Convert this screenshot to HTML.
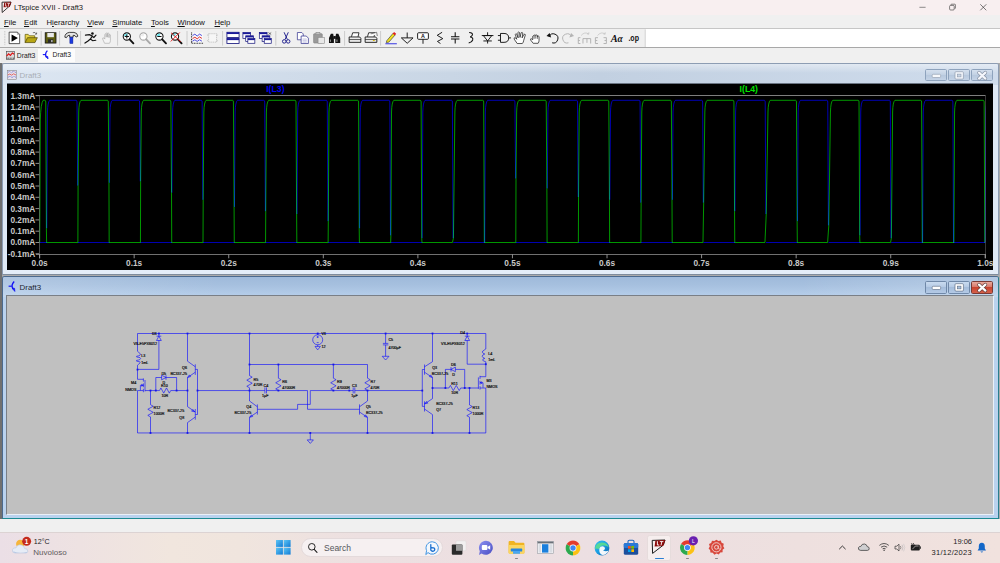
<!DOCTYPE html><html><head><meta charset="utf-8"><title>LTspice XVII - Draft3</title><style>
*{box-sizing:border-box;margin:0;padding:0}
html,body{width:1000px;height:563px;overflow:hidden;background:#f0f0f0;font-family:"Liberation Sans",sans-serif;}
#root{position:absolute;left:0;top:0;width:1000px;height:563px;overflow:hidden;background:#f0f0f0}
.abs{position:absolute}
#titlebar{left:0;top:0;width:1000px;height:15px;background:#f8eff0}
#titlebar .t{position:absolute;left:14px;top:2.5px;font-size:7.6px;color:#1a1a1a;white-space:nowrap}
#menubar{left:0;top:15px;width:1000px;height:13.5px;background:#f0f0f0}
#menubar span{position:absolute;top:2.6px;font-size:7.7px;color:#111;white-space:nowrap}
#menubar u{text-decoration:underline;text-underline-offset:0.6px;text-decoration-thickness:0.55px}
#tbline{left:0;top:28.2px;width:1000px;height:0.9px;background:#c6c6c6}
#toolbar{left:0;top:29px;width:1000px;height:18.3px;background:#f0f0f0}
#tbwhite{left:645.5px;top:29px;width:354.5px;height:18.3px;background:#fff}
#tbline2{left:0;top:47.2px;width:1000px;height:1px;background:#a8a8a8}
#tabbar{left:0;top:48.2px;width:1000px;height:15px;background:#f0f0f0}
.tab{position:absolute;top:0.5px;height:13.5px;font-size:6.8px;color:#222;white-space:nowrap}
#mdi{left:0;top:63px;width:1000px;height:456px;background:#ababab}
.yl{position:absolute;left:0;width:35.3px;text-align:right;font-size:8.3px;font-weight:bold;color:#c8c8c8;line-height:10px;height:10px;white-space:nowrap}
.xl{position:absolute;top:258.2px;width:30px;text-align:center;font-size:8.3px;font-weight:bold;color:#c8c8c8;line-height:10px;height:10px;white-space:nowrap}
.win{position:absolute;border-radius:2.6px 2.6px 0 0;overflow:hidden}
.wt{position:absolute;font-size:7.9px;white-space:nowrap}
.cb{position:absolute;top:5.7px;height:12.4px;width:21.6px;border:0.6px solid #8ea3bd;border-radius:1.6px;background:linear-gradient(#d5e0ee,#c3d2e4 45%,#b7c8dd 50%,#c4d3e6)}
#statusbar{left:0;top:519px;width:1000px;height:13.3px;background:#f0f0f0}
#taskbar{left:0;top:532.3px;width:1000px;height:30.7px;background:linear-gradient(90deg,#ebdfe6,#eee2e2 8%,#f1e6de 17%,#f0e5de 24%,#ede0e1 36%,#ecdfe2 60%,#eee0df 80%,#f1e2de);border-top:0.7px solid #dcd3d3}
</style></head><body><div id="root">
<div id="titlebar" class="abs"><svg class="abs" style="left:1px;top:1px" width="12" height="13" viewBox="0 0 12 13"><path d="M1 1.2 L1.2 11.5 L9 4.6 L10 1 Z" fill="none" stroke="#222" stroke-width="0.9"/><path d="M3.2 1.6 L10.2 1.2 L8.6 6 L2.6 6.2 Z" fill="#8b0a0a"/><path d="M4.6 2 V5.2 H6 M6.4 2.4 H9 M7.8 2.4 L7.2 5.6" stroke="#f4e6e6" stroke-width="0.8" fill="none"/></svg><div class="t">LTspice XVII - Draft3</div><svg class="abs" style="left:900px;top:0" width="100" height="15" viewBox="0 0 100 15"><path d="M19.4 7.3 H25.6" stroke="#444" stroke-width="0.6"/><rect x="49.6" y="5.4" width="4.6" height="4.6" rx="1" fill="none" stroke="#333" stroke-width="0.6"/><path d="M51 5.2 V4.6 Q51 4.2 51.6 4.2 H54.8 Q55.4 4.2 55.4 4.8 V8 Q55.4 8.6 54.8 8.6" fill="none" stroke="#333" stroke-width="0.6"/><path d="M80.3 4.3 L86.3 10.3 M86.3 4.3 L80.3 10.3" stroke="#333" stroke-width="0.65"/></svg></div>
<div id="menubar" class="abs"><span style="left:4px"><u>F</u>ile</span><span style="left:24px"><u>E</u>dit</span><span style="left:46.5px">H<u>i</u>erarchy</span><span style="left:87.3px"><u>V</u>iew</span><span style="left:112.3px"><u>S</u>imulate</span><span style="left:151px"><u>T</u>ools</span><span style="left:177.5px"><u>W</u>indow</span><span style="left:214.5px"><u>H</u>elp</span></div>
<div id="tbline" class="abs"></div><div id="toolbar" class="abs"></div><div id="tbwhite" class="abs"></div><div id="tbline2" class="abs"></div>
<svg class="abs" style="left:0;top:0" width="1000" height="50" viewBox="0 0 1000 50"><path d="M4.8 31 V45.5" stroke="#b8b8b8" stroke-width="0.9" stroke-dasharray="0.8 0.8"/><path d="M41.2 31 V45.6" stroke="#c2c2c2" stroke-width="0.8"/><path d="M59.6 31 V45.6" stroke="#c2c2c2" stroke-width="0.8"/><path d="M80.6 31 V45.6" stroke="#c2c2c2" stroke-width="0.8"/><path d="M117.6 31 V45.6" stroke="#c2c2c2" stroke-width="0.8"/><path d="M187 31 V45.6" stroke="#c2c2c2" stroke-width="0.8"/><path d="M222.6 31 V45.6" stroke="#c2c2c2" stroke-width="0.8"/><path d="M275.8 31 V45.6" stroke="#c2c2c2" stroke-width="0.8"/><path d="M344.6 31 V45.6" stroke="#c2c2c2" stroke-width="0.8"/><path d="M380.6 31 V45.6" stroke="#c2c2c2" stroke-width="0.8"/><path d="M645.2 29.5 V47" stroke="#d0d0d0" stroke-width="0.8"/><g transform="translate(14.4 37.9) scale(1.17)"><path d="M-4.5 -4.9 H2.6 L4.5 -3 V4.9 H-4.5 Z" fill="#fff" stroke="#222" stroke-width="0.65"/><path d="M2.6 -4.9 V-3 H4.5" fill="none" stroke="#555" stroke-width="0.4"/><path d="M-2.4 -3 L3 0.1 L-2.4 3.2 Z" fill="#000"/></g><g transform="translate(31 37.9) scale(1.17)"><path d="M-5 4 V-3 H-2.4 L-1.4 -1.8 H3.2 V0" fill="#e8d44a" stroke="#5a5200" stroke-width="0.6"/><path d="M-5 4 L-3 -0.2 H5.4 L3.4 4 Z" fill="#b8a614" stroke="#4a4400" stroke-width="0.6"/><path d="M1.6 -4.4 Q3.6 -5.4 4.6 -3.4 M4.8 -3.2 L3.4 -3.2 M4.8 -3.2 L4.8 -4.6" stroke="#222" stroke-width="0.5" fill="none"/></g><g transform="translate(50.6 37.9) scale(1.17)"><rect x="-4.6" y="-4.4" width="9.2" height="8.8" fill="#5d5d10" stroke="#111" stroke-width="0.7"/><rect x="-2.8" y="-4.2" width="5.6" height="3.6" fill="#e9e9e9"/><rect x="-2.2" y="1.2" width="4.4" height="3" fill="#2a2a2a"/><rect x="0.6" y="1.8" width="1" height="1.8" fill="#ddd"/></g><g transform="translate(71.4 37.9) scale(1.17)"><path d="M-5.6 -0.6 Q-5.6 -4 -1.8 -4.7 H2.2 Q5 -4.5 5.6 -1.5 L4 -0.7 Q3.4 -2.4 1.5 -2.2 V-0.7 H-1.5 V-2.3 Q-3.4 -2.5 -4.2 -0.2 Z" fill="#e4e4e4" stroke="#1a1a1a" stroke-width="0.7"/><rect x="-1.3" y="-0.6" width="2.6" height="5.4" fill="#1a3ae0" stroke="#0a1a90" stroke-width="0.4"/></g><g transform="translate(90.6 37.9) scale(1.17)"><circle cx="1.6" cy="-3.8" r="1.1" fill="#111"/><path d="M-4.4 -2.4 L-1 -2.8 L1.4 -1.6 L-0.2 1 L1.8 2.4 L4.4 2 M-0.2 1 L-2.2 2.6 L-4.8 4.4 M0.4 -1.8 L2.8 -0.4 L4.6 -2.4" stroke="#111" stroke-width="1" fill="none" stroke-linecap="round"/></g><g transform="translate(107.6 37.9) scale(1.17)"><path d="M-2.6 4.6 L-4.2 1 Q-4.6 -0.4 -3.2 0 L-2.4 1 V-3 Q-1.8 -4 -1.2 -3 V-0.6 V-4 Q-0.6 -5 0 -4 V-0.6 V-3.6 Q0.6 -4.6 1.2 -3.6 V-0.2 V-2.6 Q1.9 -3.4 2.4 -2.6 V2.2 Q2.4 3.6 1.6 4.6 Z" fill="#f4f4f4" stroke="#a9a9a9" stroke-width="0.55"/></g><g transform="translate(128 37.9) scale(1.17)"><circle cx="-1" cy="-1.2" r="3.1" fill="#fff" stroke="#111" stroke-width="0.9"/><path d="M-3.4 -1.6 A2.5 2.5 0 0 1 -0.2 -3.6 L-1 -1.2 Z" fill="#6fe6ee"/><path d="M1.4 1.2 L4.6 4.6" stroke="#111" stroke-width="1.6" stroke-linecap="round"/><path d="M-2.8 -1.2 H0.8 M-1 -3 V0.6" stroke="#111" stroke-width="0.9"/></g><g transform="translate(144.6 37.9) scale(1.17)"><circle cx="-1" cy="-1.2" r="3.1" fill="#fff" stroke="#a8a8a8" stroke-width="0.9"/><path d="M-3.4 -1.6 A2.5 2.5 0 0 1 -0.2 -3.6 L-1 -1.2 Z" fill="#eeeeee"/><path d="M1.4 1.2 L4.6 4.6" stroke="#a8a8a8" stroke-width="1.6" stroke-linecap="round"/></g><g transform="translate(160.6 37.9) scale(1.17)"><circle cx="-1" cy="-1.2" r="3.1" fill="#fff" stroke="#111" stroke-width="0.9"/><path d="M-3.4 -1.6 A2.5 2.5 0 0 1 -0.2 -3.6 L-1 -1.2 Z" fill="#6fe6ee"/><path d="M1.4 1.2 L4.6 4.6" stroke="#111" stroke-width="1.6" stroke-linecap="round"/><path d="M-2.8 -1.2 H0.8" stroke="#111" stroke-width="0.9"/></g><g transform="translate(176.2 37.9) scale(1.17)"><circle cx="-1" cy="-1.2" r="3.1" fill="#fff" stroke="#111" stroke-width="0.9"/><path d="M-3.4 -1.6 A2.5 2.5 0 0 1 -0.2 -3.6 L-1 -1.2 Z" fill="#6fe6ee"/><path d="M1.4 1.2 L4.6 4.6" stroke="#111" stroke-width="1.6" stroke-linecap="round"/><path d="M-4.4 -4.4 L3.8 3.2 M3 -4.6 L-4.6 3" stroke="#e01818" stroke-width="0.8"/></g><g transform="translate(197.2 37.9) scale(1.17)"><rect x="-4.8" y="-4.6" width="9.8" height="9.2" fill="#f7f7f7"/><path d="M-4.8 -4.6 V4.6 H5" fill="none" stroke="#222" stroke-width="0.9" stroke-dasharray="0.8 0.6"/><path d="M-4 -2 L-2 -3.2 L0 -1.6 L2 -3.2 L4 -2 M-4 2.8 L-2 1.6 L0 3 L2 1.6 L4 2.8" stroke="#2a2ad8" stroke-width="0.7" fill="none"/><path d="M-4 0.6 L-2 -0.6 L0 0.8 L2 -0.8 L4 0.4" stroke="#e02020" stroke-width="0.8" fill="none"/></g><g transform="translate(212.6 37.9) scale(1.17)"><path d="M-3.4 -3.6 H3.4 V3.6 H-3.4 Z M-4.8 -2.4 H-3.4 M3.4 -2.4 H4.8 M-4.8 2.4 H-3.4 M3.4 2.4 H4.8" fill="#f6f6f6" stroke="#b4b4b4" stroke-width="0.6" stroke-dasharray="1 0.6"/></g><g transform="translate(233 37.9) scale(1.17)"><rect x="-5.2" y="-4.8" width="10.4" height="4.4" fill="#fff" stroke="#10107a" stroke-width="0.7"/><rect x="-5.2" y="-4.8" width="10.4" height="1.5" fill="#1a1a9a"/><rect x="-5.2" y="0.4" width="10.4" height="4.4" fill="#fff" stroke="#10107a" stroke-width="0.7"/><rect x="-5.2" y="0.4" width="10.4" height="1.5" fill="#1a1a9a"/></g><g transform="translate(249 37.9) scale(1.17)"><rect x="-5.2" y="-4.6" width="6.6" height="5" fill="#fff" stroke="#10107a" stroke-width="0.6"/><rect x="-5.2" y="-4.6" width="6.6" height="1.4" fill="#1a1a9a"/><rect x="-2.8" y="-1.8" width="6.6" height="5" fill="#fff" stroke="#10107a" stroke-width="0.6"/><rect x="-2.8" y="-1.8" width="6.6" height="1.4" fill="#1a1a9a"/><rect x="-1" y="0.6" width="6" height="4" fill="#fff" stroke="#10107a" stroke-width="0.6"/><rect x="-1" y="0.6" width="6" height="1.3" fill="#1a1a9a"/></g><g transform="translate(265.4 37.9) scale(1.17)"><rect x="-5.2" y="-4.6" width="6.6" height="5" fill="#fff" stroke="#10107a" stroke-width="0.6"/><rect x="-5.2" y="-4.6" width="6.6" height="1.4" fill="#1a1a9a"/><rect x="-2.8" y="-1.8" width="6.6" height="5" fill="#fff" stroke="#10107a" stroke-width="0.6"/><rect x="-2.8" y="-1.8" width="6.6" height="1.4" fill="#1a1a9a"/><rect x="-1" y="0.6" width="6" height="4" fill="#fff" stroke="#10107a" stroke-width="0.6"/><rect x="-1" y="0.6" width="6" height="1.3" fill="#1a1a9a"/><path d="M2.6 -4.6 L5 -2.8 M5 -4.6 L2.6 -2.8" stroke="#333" stroke-width="0.5"/></g><g transform="translate(286.2 37.9) scale(1.17)"><path d="M-1.8 -4.8 L1 1.4 M1.8 -4.8 L-1 1.4" stroke="#1a1a8a" stroke-width="0.8"/><circle cx="-1.7" cy="3" r="1.5" fill="none" stroke="#1a1a8a" stroke-width="0.8"/><circle cx="1.7" cy="3" r="1.5" fill="none" stroke="#1a1a8a" stroke-width="0.8"/></g><g transform="translate(303 37.9) scale(1.17)"><path d="M-4.8 -4.6 H-1 L0.2 -3.4 V1.6 H-4.8 Z" fill="#fff" stroke="#2a2a8a" stroke-width="0.6"/><path d="M-1.6 -1.6 H2.8 L4.6 0.2 V4.8 H-1.6 Z" fill="#fff" stroke="#2a2a8a" stroke-width="0.6"/><path d="M-0.4 1 H3.2 M-0.4 2.4 H3.2 M-0.4 3.6 H3.2" stroke="#8a8ac8" stroke-width="0.45"/></g><g transform="translate(319 37.9) scale(1.17)"><rect x="-4.6" y="-3.6" width="7.4" height="8" rx="0.6" fill="#9a9a9a" stroke="#7a7a7a" stroke-width="0.5"/><rect x="-2.6" y="-4.8" width="3.4" height="2" fill="#c4c4c4" stroke="#7a7a7a" stroke-width="0.4"/><rect x="-0.8" y="-0.4" width="5.6" height="5.2" fill="#e8e8e8" stroke="#8a8a8a" stroke-width="0.5"/></g><g transform="translate(334.6 37.9) scale(1.17)"><path d="M-4.8 4.4 V0 L-3.2 -3.6 H-1.2 L-0.6 0 V4.4 Z M4.8 4.4 V0 L3.2 -3.6 H1.2 L0.6 0 V4.4 Z" fill="#111"/><rect x="-1" y="-1.6" width="2" height="2.4" fill="#111"/><path d="M-3.6 1.4 V3.4 M2 1.4 V3.4" stroke="#ddd" stroke-width="0.6"/></g><g transform="translate(355 37.9) scale(1.17)"><path d="M-3 -1 L-2 -4.4 H3.4 L2.6 -1" fill="#fff" stroke="#111" stroke-width="0.7"/><path d="M-5 -0.8 H4 L5 0.4 V3.8 H-5 Z" fill="#ececec" stroke="#111" stroke-width="0.75"/><path d="M-5 1.4 H5" stroke="#222" stroke-width="0.6"/></g><g transform="translate(371 37.9) scale(1.17)"><path d="M-3 -1 L-2 -4.4 H3.4 L2.6 -1" fill="#fff" stroke="#111" stroke-width="0.7"/><path d="M-5 -0.8 H4 L5 0.4 V3.8 H-5 Z" fill="#ececec" stroke="#111" stroke-width="0.75"/><path d="M-5 1.4 H5" stroke="#222" stroke-width="0.6"/><path d="M-0.2 -3.4 L4.8 -4.8 L5.4 -1.6" fill="#f4f4f4" stroke="#333" stroke-width="0.5"/><rect x="1.6" y="1.8" width="1.6" height="0.8" fill="#d8b400"/></g><g transform="translate(391 37.9) scale(1.17)"><path d="M-3.6 2.4 L1.8 -4 L3.6 -2.6 L-1.8 3.6 L-4 4 Z" fill="#f0e020" stroke="#222" stroke-width="0.5"/><path d="M1.4 -3.6 L2.6 -5 L4.4 -3.6 L3.4 -2.2 Z" fill="#e02020"/><path d="M-4.8 5 H5" stroke="#2a2ae0" stroke-width="0.8"/></g><g transform="translate(407.2 37.9) scale(1.17)"><path d="M0 -4.6 V0 M-5 0 H5 L0 4.6 Z" fill="none" stroke="#111" stroke-width="0.8"/></g><g transform="translate(423 37.9) scale(1.17)"><rect x="-4.6" y="-4.4" width="9.2" height="5.6" rx="0.8" fill="#fff" stroke="#111" stroke-width="0.8"/><path d="M0 1.2 V5" stroke="#111" stroke-width="0.8"/><text x="0" y="0" font-size="4.6" font-weight="bold" text-anchor="middle" fill="#111" font-family="Liberation Sans, sans-serif">A</text></g><g transform="translate(440 37.9) scale(1.17)"><path d="M1.8 -4.8 L-2.4 -2.2 L2.4 0.6 L-2.2 3 L0.4 4.8" fill="none" stroke="#111" stroke-width="0.8"/></g><g transform="translate(455.2 37.9) scale(1.17)"><path d="M0 -4.8 V-1 M-3.6 -1 H3.6 M-3.6 1 H3.6 M0 1 V4.8" fill="none" stroke="#111" stroke-width="0.9"/></g><g transform="translate(470.8 37.9) scale(1.17)"><path d="M-1.4 -4.6 Q1.8 -4.4 1.4 -2.6 Q1 -1.2 -0.6 -0.8 Q2.2 -0.4 1.6 1.8 Q1 3.8 -1.8 4.4" fill="none" stroke="#111" stroke-width="0.9"/></g><g transform="translate(487.6 37.9) scale(1.17)"><path d="M-5 -2 H5 M-3.6 -2 L0 2.6 L3.6 -2 Z M-3.6 2.6 H3.6 M0 2.6 V4.8 M0 -2 V-4.8" fill="none" stroke="#111" stroke-width="0.8"/></g><g transform="translate(504 37.9) scale(1.17)"><path d="M-5.2 -2 H-3 M-5.2 2 H-3 M-3 -3.8 H0 Q4 -3.8 4 0 Q4 3.8 0 3.8 H-3 Z M4 0 H6" fill="none" stroke="#111" stroke-width="0.8"/></g><g transform="translate(520 37.9) scale(1.17)"><path d="M-2.4 4.8 L-5 1 Q-5.4 -0.6 -3.8 0 L-2.8 1.2 L-4 -3 Q-3.6 -4.2 -2.8 -3.2 L-1.6 0 L-1.8 -4.6 Q-1 -5.6 -0.4 -4.6 L0 -0.4 L1 -4.4 Q1.8 -5.2 2.4 -4.2 L1.8 0 L3.4 -3 Q4.4 -3.6 4.6 -2.6 L3.2 2 Q3 3.8 2 4.8 Z" fill="#fff" stroke="#111" stroke-width="0.6"/></g><g transform="translate(536 37.9) scale(1.17)"><path d="M-2.4 4.6 L-4.6 1.8 Q-5 0.4 -3.6 0.8 L-2.8 1.6 V-1.4 Q-2.2 -2.4 -1.6 -1.4 V-2.2 Q-0.9 -3.2 -0.2 -2.2 V-2 Q0.5 -3 1.2 -2 V-1.2 Q1.9 -2 2.6 -1.2 V2.4 Q2.6 3.6 1.8 4.6 Z" fill="#fff" stroke="#111" stroke-width="0.6"/><path d="M-1.6 -1.4 V0.8 M-0.2 -2.2 V0.6 M1.2 -2 V0.8" stroke="#111" stroke-width="0.5"/></g><g transform="translate(552.6 37.9) scale(1.17)"><path d="M-2.9 -1.2 A3.9 3.9 0 1 1 -0.4 4.2" fill="none" stroke="#111" stroke-width="0.85"/><path d="M-5.2 -1.6 L-1.2 -0.4 L-2.6 -4.2 Z" fill="#111"/></g><g transform="translate(568 37.9) scale(1.17)"><path d="M2.9 -1.2 A3.9 3.9 0 1 0 0.4 4.2" fill="none" stroke="#b4b4b4" stroke-width="0.85"/><path d="M5.2 -1.6 L1.2 -0.4 L2.6 -4.2 Z" fill="#b4b4b4"/></g><g transform="translate(584.6 37.9) scale(1.17)"><path d="M-3.6 -0.2 H-5.4 V4.8 H-3.6 M-5.4 2.2 H-4 M-1.4 4.8 V0.6 H5.2 V4.8 M2 0.6 V4.2" fill="none" stroke="#b0b0b0" stroke-width="0.8"/><path d="M-3 -2 Q0 -5.6 3.4 -3.4 M3.6 -3.2 L2 -3.4 M3.6 -3.2 L3.6 -4.8" fill="none" stroke="#b8b8b8" stroke-width="0.5"/></g><g transform="translate(601 37.9) scale(1.17)"><path d="M-2.6 -0.2 H-4.8 V4.8 H-2.6 M-4.8 2.2 H-3.2 M2.2 -0.2 H4.6 V4.8 H2.2 M4.6 2.2 H3" fill="none" stroke="#b0b0b0" stroke-width="0.8"/><path d="M-3 -2 Q0 -5.6 3.4 -3.4 M3.6 -3.2 L2 -3.4 M3.6 -3.2 L3.6 -4.8" fill="none" stroke="#b8b8b8" stroke-width="0.5"/></g><text x="610.8" y="42.2" font-size="10.4" font-weight="bold" font-style="italic" fill="#111" font-family="Liberation Serif, serif">A</text><text x="617.6" y="42.2" font-size="9.4" font-weight="bold" font-style="italic" fill="#111" font-family="Liberation Serif, serif">α</text><text x="628.4" y="41.4" font-size="8.6" font-weight="bold" fill="#111" font-family="Liberation Sans, sans-serif" textLength="10.6" lengthAdjust="spacingAndGlyphs">.op</text></svg>
<div id="tabbar" class="abs"><div class="tab" style="left:1px;width:36.5px;background:#ebebeb"></div><div class="tab" style="left:37.5px;width:37.5px;background:#fcfcfc"></div><svg class="abs" style="left:5.5px;top:3px" width="9" height="9" viewBox="0 0 9 9"><rect x="0.3" y="0.3" width="8.2" height="8" fill="#d9d9d9" stroke="#444" stroke-width="0.6"/><path d="M0.6 5.2 L2.6 2.8 L4.4 4.4 L6.4 2 L8.2 3.2" stroke="#e01010" stroke-width="1.1" fill="none"/><path d="M0.6 7.2 H8.2" stroke="#333" stroke-width="0.9" stroke-dasharray="1 0.6"/></svg><span class="tab" style="left:16.8px;top:3.4px;height:auto">Draft3</span><svg class="abs" style="left:41.5px;top:2.2px" width="8" height="10" viewBox="0 0 8 10"><path d="M5.4 0.6 Q2.2 3.8 4.6 7.6" stroke="#1414f4" stroke-width="1.25" fill="none"/><path d="M0.8 4.6 H3.4" stroke="#1414f4" stroke-width="1.1"/><path d="M3.8 6.2 L6 9 L5.8 6.6 Z" fill="#1414f4" stroke="#1414f4" stroke-width="0.7"/></svg><span class="tab" style="left:52.5px;top:2.8px;height:auto">Draft3</span></div>
<div id="mdi" class="abs"></div>
<div class="abs" style="left:0;top:63px;width:1.6px;height:456px;background:#707070"></div>
<div class="win" style="left:1.5px;top:63.4px;width:997.5px;height:212px;background:#dfe9f5;border:0.6px solid #8d9db3;border-bottom-color:#7f8c9c"><div class="abs" style="left:0;top:0;width:100%;height:20.5px;background:linear-gradient(90deg,#dce6f2,#c9d6e5 45%,#c2d0e1 60%,#cfdcec)"></div><div class="abs" style="left:0;top:0;width:100%;height:9px;background:linear-gradient(rgba(255,255,255,.45),rgba(255,255,255,0))"></div><div class="abs" style="left:4.4px;top:18.9px;width:986.5px;height:187.1px;background:#000;border-top:0.8px solid #6a7482"></div><div class="abs" style="left:0;top:206px;width:100%;height:6px;background:#e4edf8"></div></div>
<svg class="abs" style="left:6.6px;top:69.5px" width="10" height="10" viewBox="0 0 10 10"><rect x="0.4" y="0.4" width="9" height="9" fill="#e6e2ea" stroke="#777" stroke-width="0.5"/><path d="M0.8 2.4 L2.6 1.4 L4.4 2.8 L6.4 1.2 L9 2.6 M0.8 7.4 L3 6.2 L5 7.6 L7 6.2 L9 7.4" stroke="#7a7ad8" stroke-width="0.9" fill="none" stroke-dasharray="1.2 0.5"/><path d="M0.8 5 L2.8 4 L4.6 5.2 L6.6 3.8 L9 5" stroke="#e06a6a" stroke-width="1" fill="none"/></svg>
<div class="wt" style="left:19.6px;top:71px;color:#a9aeb6">Draft3</div>
<div class="cb" style="left:925.4px;top:69.1px"></div>
<div class="cb" style="left:948.4px;top:69.1px"></div>
<div class="cb" style="left:971.4px;top:69.1px"></div>
<svg class="abs" style="left:925px;top:69px" width="70" height="13" viewBox="0 0 70 13"><rect x="7.2" y="5.3" width="8.4" height="3.2" rx="1" fill="#f6f8fb" stroke="#8b97a8" stroke-width="0.6"/><rect x="30" y="2.7" width="8.4" height="7.4" rx="1" fill="#f2f5fa" stroke="#8490a2" stroke-width="0.6"/><rect x="32.4" y="5.1" width="3.6" height="2.8" fill="#c9d6e6" stroke="#8490a2" stroke-width="0.5"/><path d="M54 3.6 L60.4 9.6 M60.4 3.6 L54 9.6" stroke="#8490a2" stroke-width="3.5" stroke-linecap="round"/><path d="M54 3.6 L60.4 9.6 M60.4 3.6 L54 9.6" stroke="#f4f6fb" stroke-width="2.2" stroke-linecap="round"/></svg>
<svg class="abs" style="left:0;top:0" width="1000" height="280" viewBox="0 0 1000 280"><defs><clipPath id="pc"><rect x="39.6" y="96" width="945.9" height="158"/></clipPath></defs><path d="M36 95.6 H985.3 M39.6 95.6 V258.3 M36 254.3 H985.3 M985.3 95.6 V258.3" stroke="#9c9c9c" stroke-width="0.9" fill="none"/>
<path d="M35.5 95.60 H39.6 M35.5 106.90 H39.6 M35.5 118.20 H39.6 M35.5 129.50 H39.6 M35.5 140.80 H39.6 M35.5 152.10 H39.6 M35.5 163.40 H39.6 M35.5 174.70 H39.6 M35.5 186.00 H39.6 M35.5 197.30 H39.6 M35.5 208.60 H39.6 M35.5 219.90 H39.6 M35.5 231.20 H39.6 M35.5 242.50 H39.6 M35.5 253.80 H39.6 M39.60 254.3 V258.3 M134.17 254.3 V258.3 M228.74 254.3 V258.3 M323.31 254.3 V258.3 M417.88 254.3 V258.3 M512.45 254.3 V258.3 M607.02 254.3 V258.3 M701.59 254.3 V258.3 M796.16 254.3 V258.3 M890.73 254.3 V258.3 M985.30 254.3 V258.3 " stroke="#9c9c9c" stroke-width="0.9" fill="none"/>
<g clip-path="url(#pc)" fill="none" stroke-width="0.7" stroke-linejoin="round" style="isolation:isolate"><rect x="39" y="95" width="948" height="160" fill="#000" stroke="none"/><path d="M39.6 242.5 L46.80 242.5 M46.80 228.28 L47.45 112 Q47.70 102 49.75 100.3 L76.13 100.3 Q77.03 100.3 77.03 102 L77.68 185.62 M77.88 242.5 L109.36 242.5 M109.36 182.78 L110.01 112 Q110.26 102 112.31 100.3 L138.69 100.3 Q139.59 100.3 139.59 102 L140.24 181.35 M140.44 242.5 L171.92 242.5 M171.92 192.73 L172.57 112 Q172.82 102 174.87 100.3 L201.25 100.3 Q202.15 100.3 202.15 102 L202.80 199.84 M203.00 242.5 L234.48 242.5 M234.48 206.95 L235.13 112 Q235.38 102 237.43 100.3 L263.81 100.3 Q264.71 100.3 264.71 102 L265.36 211.22 M265.56 242.5 L297.04 242.5 M297.04 214.06 L297.69 112 Q297.94 102 299.99 100.3 L326.37 100.3 Q327.27 100.3 327.27 102 L327.92 221.17 M328.12 242.5 L359.60 242.5 M359.60 228.28 L360.25 112 Q360.50 102 362.55 100.3 L388.93 100.3 Q389.83 100.3 389.83 102 L390.48 235.39 M390.68 242.5 L422.16 242.5 M422.16 238.23 L422.81 112 Q423.06 102 425.11 100.3 L451.49 100.3 Q452.39 100.3 452.39 102 L453.04 238.23 M453.24 242.5 L484.72 242.5 L485.37 112 Q485.62 102 487.67 100.3 L514.05 100.3 Q514.95 100.3 514.95 102 L515.60 178.51 M515.80 242.5 L547.28 242.5 M547.28 188.46 L547.93 112 Q548.18 102 550.23 100.3 L576.61 100.3 Q577.51 100.3 577.51 102 L578.16 197.00 M578.36 242.5 L609.84 242.5 M609.84 199.84 L610.49 112 Q610.74 102 612.79 100.3 L639.17 100.3 Q640.07 100.3 640.07 102 L640.72 202.68 M640.92 242.5 L672.40 242.5 M672.40 199.84 L673.05 112 Q673.30 102 675.35 100.3 L701.73 100.3 Q702.63 100.3 702.63 102 L703.28 202.68 M703.48 242.5 L734.96 242.5 M734.96 211.22 L735.61 112 Q735.86 102 737.91 100.3 L764.29 100.3 Q765.19 100.3 765.19 102 L765.84 214.06 M766.04 242.5 L797.52 242.5 M797.52 221.17 L798.17 112 Q798.42 102 800.47 100.3 L826.85 100.3 Q827.75 100.3 827.75 102 L828.40 225.44 M828.60 242.5 L860.08 242.5 M860.08 235.39 L860.73 112 Q860.98 102 863.03 100.3 L889.41 100.3 Q890.31 100.3 890.31 102 L890.96 238.23 M891.16 242.5 L922.64 242.5 L923.29 112 Q923.54 102 925.59 100.3 L951.97 100.3 Q952.87 100.3 952.87 102 L953.52 242.50 L953.52 242.5 L985.20 242.5 L985.85 112 Q986.10 102 988.15 100.3 " stroke="#0000ff"/><path d="M39.7 242.5 L40.300000000000004 120 Q40.800000000000004 103 43.2 100.3 L44.85 100.3 Q45.75 100.3 45.75 102 L46.40 228.28 L46.60 242.5 L77.88 242.5 L78.08 185.62 L78.73 112 Q78.98 102 81.03 100.3 L107.41 100.3 Q108.31 100.3 108.31 102 L108.96 182.78 L109.16 242.5 L140.44 242.5 L140.64 181.35 L141.29 112 Q141.54 102 143.59 100.3 L169.97 100.3 Q170.87 100.3 170.87 102 L171.52 192.73 L171.72 242.5 L203.00 242.5 L203.20 199.84 L203.85 112 Q204.10 102 206.15 100.3 L232.53 100.3 Q233.43 100.3 233.43 102 L234.08 206.95 L234.28 242.5 L265.56 242.5 L265.76 211.22 L266.41 112 Q266.66 102 268.71 100.3 L295.09 100.3 Q295.99 100.3 295.99 102 L296.64 214.06 L296.84 242.5 L328.12 242.5 L328.32 221.17 L328.97 112 Q329.22 102 331.27 100.3 L357.65 100.3 Q358.55 100.3 358.55 102 L359.20 228.28 L359.40 242.5 L390.68 242.5 L390.88 235.39 L391.53 112 Q391.78 102 393.83 100.3 L420.21 100.3 Q421.11 100.3 421.11 102 L421.76 238.23 L421.96 242.5 L452.44 242.5 L453.44 238.23 L454.89 112 Q455.14 102 457.19 100.3 L482.77 100.3 Q483.67 100.3 483.67 102 L484.32 242.50 L484.52 242.5 L515.80 242.5 L516.00 178.51 L516.65 112 Q516.90 102 518.95 100.3 L545.33 100.3 Q546.23 100.3 546.23 102 L546.88 188.46 L547.08 242.5 L578.36 242.5 L578.56 197.00 L579.21 112 Q579.46 102 581.51 100.3 L607.89 100.3 Q608.79 100.3 608.79 102 L609.44 199.84 L609.64 242.5 L640.92 242.5 L641.12 202.68 L641.77 112 Q642.02 102 644.07 100.3 L670.45 100.3 Q671.35 100.3 671.35 102 L672.00 199.84 L672.20 242.5 L702.98 242.5 L703.68 202.68 L704.83 112 Q705.08 102 707.13 100.3 L733.01 100.3 Q733.91 100.3 733.91 102 L734.56 211.22 L734.76 242.5 L764.94 242.5 L766.24 214.06 L767.99 112 Q768.24 102 770.29 100.3 L795.57 100.3 Q796.47 100.3 796.47 102 L797.12 221.17 L797.32 242.5 L827.60 242.5 L828.80 225.44 L830.45 112 Q830.70 102 832.75 100.3 L858.13 100.3 Q859.03 100.3 859.03 102 L859.68 235.39 L859.88 242.5 L890.56 242.5 L891.36 238.23 L892.61 112 Q892.86 102 894.91 100.3 L920.69 100.3 Q921.59 100.3 921.59 102 L922.24 242.50 L922.44 242.5 L953.72 242.5 L953.92 242.50 L954.57 112 Q954.82 102 956.87 100.3 L983.25 100.3 Q984.15 100.3 984.15 102 L984.80 242.50 L985.00 242.5 " stroke="#00d800" style="mix-blend-mode:screen"/></g></svg>
<div class="abs" style="left:0;top:0;width:993px;height:269.2px;overflow:hidden;pointer-events:none"><div class="yl" style="top:90.60px">1.3mA</div>
<div class="yl" style="top:101.89px">1.2mA</div>
<div class="yl" style="top:113.18px">1.1mA</div>
<div class="yl" style="top:124.48px">1.0mA</div>
<div class="yl" style="top:135.77px">0.9mA</div>
<div class="yl" style="top:147.06px">0.8mA</div>
<div class="yl" style="top:158.35px">0.7mA</div>
<div class="yl" style="top:169.65px">0.6mA</div>
<div class="yl" style="top:180.94px">0.5mA</div>
<div class="yl" style="top:192.23px">0.4mA</div>
<div class="yl" style="top:203.52px">0.3mA</div>
<div class="yl" style="top:214.82px">0.2mA</div>
<div class="yl" style="top:226.11px">0.1mA</div>
<div class="yl" style="top:237.40px">0.0mA</div>
<div class="yl" style="top:248.69px">-0.1mA</div>
<div class="xl" style="left:24.60px">0.0s</div>
<div class="xl" style="left:119.17px">0.1s</div>
<div class="xl" style="left:213.74px">0.2s</div>
<div class="xl" style="left:308.31px">0.3s</div>
<div class="xl" style="left:402.88px">0.4s</div>
<div class="xl" style="left:497.45px">0.5s</div>
<div class="xl" style="left:592.02px">0.6s</div>
<div class="xl" style="left:686.59px">0.7s</div>
<div class="xl" style="left:781.16px">0.8s</div>
<div class="xl" style="left:875.73px">0.9s</div>
<div class="xl" style="left:970.30px">1.0s</div><div class="abs" style="left:266.2px;top:84.1px;font-size:8.7px;font-weight:bold;color:#0000f4;line-height:10px">I(L3)</div><div class="abs" style="left:739.6px;top:84.1px;font-size:8.7px;font-weight:bold;color:#00e400;line-height:10px">I(L4)</div></div>
<div class="win" style="left:1.5px;top:275.8px;width:997.5px;height:243.2px;background:#bad2ee;border:0.7px solid #4c6a8e;border-bottom:0.9px solid #1d8a92;border-right-color:#2a7e8e"><div class="abs" style="left:0;top:0;width:100%;height:20px;background:linear-gradient(#9fbadb,#a6c0df 40%,#b7cfeb)"></div><div class="abs" style="left:0;top:0;width:100%;height:20px;background:linear-gradient(90deg,rgba(255,255,255,.16),rgba(255,255,255,0) 22%,rgba(255,255,255,0) 80%,rgba(255,255,255,.2))"></div><div class="abs" style="left:3.7px;top:18.2px;width:988px;height:219.7px;background:#c0c0c0;border:0.8px solid #7a7f86;border-right:0.6px solid #eaf0f8;border-bottom:0.6px solid #eaf0f8"></div></div>
<svg class="abs" style="left:7.5px;top:281.4px" width="8" height="11" viewBox="0 0 8 11"><path d="M6.2 0.6 Q2.6 4.2 5 8.2" stroke="#1414f4" stroke-width="1.35" fill="none"/><path d="M0.6 5.2 H3.8" stroke="#1414f4" stroke-width="1.2"/><path d="M4.2 7 L6.8 10.4 L6.6 7.4 Z" fill="#1414f4" stroke="#1414f4" stroke-width="0.8"/></svg>
<div class="wt" style="left:19.6px;top:283.2px;color:#1d2530">Draft3</div>
<div class="cb" style="left:925.4px;top:281.4px;border-color:#6f88a8;background:linear-gradient(#c9dbf0,#b5cae4 45%,#a5bddb 50%,#b4cae6)"></div>
<div class="cb" style="left:948.4px;top:281.4px;border-color:#6f88a8;background:linear-gradient(#c9dbf0,#b5cae4 45%,#a5bddb 50%,#b4cae6)"></div>
<div class="cb" style="left:971.4px;top:281.4px;border-color:#7a3a34;background:linear-gradient(#e7a99d,#d9786a 45%,#c9432f 50%,#d4604a)"></div>
<svg class="abs" style="left:925px;top:281.3px" width="70" height="13" viewBox="0 0 70 13"><rect x="7.2" y="5.3" width="8.4" height="3.2" rx="1" fill="#fff" stroke="#55657c" stroke-width="0.6"/><rect x="30" y="2.7" width="8.4" height="7.4" rx="1" fill="#fff" stroke="#4e5d72" stroke-width="0.6"/><rect x="32.4" y="5.1" width="3.6" height="2.8" fill="#a9c0dc" stroke="#4e5d72" stroke-width="0.5"/><path d="M54 3.6 L60.4 9.6 M60.4 3.6 L54 9.6" stroke="#5e3c3a" stroke-width="3.5" stroke-linecap="round"/><path d="M54 3.6 L60.4 9.6 M60.4 3.6 L54 9.6" stroke="#fff" stroke-width="2.2" stroke-linecap="round"/></svg>
<svg class="abs" style="left:0;top:296px" width="1000" height="222" viewBox="0 296 1000 222">
<g fill="none" stroke="#0808ff" stroke-width="0.62" stroke-linecap="butt" stroke-linejoin="miter">
<path d="M137.5 333.5 H485.8 M137.5 432.95 H485.9 M249.5 364.5 H367.5 M137.5 333.5 V351.3 M137.5 351.3 L140.2 353.7 Q141 355 139 355.8 Q135.6 356 136.6 357 Q141.4 357.4 140.6 358.6 Q140 359.8 138.6 360 Q135.4 360.2 136.6 361.2 Q141.2 361.6 140.2 362.8 L137.5 365.2 M137.5 365.2 V379.3 H143.4 M143.4 378.4 V381.6 M143.4 383.4 V387.2 M143.4 388.8 V392.2 M145 380 V391.4 M143.4 390.55 H137.5 V432.95 M143.4 385.3 H140.4 V390.4 M143.2 385.3 L141.6 384.4 V386.2 Z M145 390.55 H159.5 M159.50 390.55 L160.90 387.95 L163.70 393.15 L166.50 387.95 L169.30 393.15 L170.70 390.55 M170.7 390.55 H187.5 M158.9 333.5 V336.2 M156.5 336.2 H161.3 M158.9 336.2 L156.5 340.5 H161.3 Z M158.9 340.5 V369.4 H137.5 M150.5 390.55 V404.7 M150.50 404.70 L153.20 406.22 L147.80 409.27 L153.20 412.32 L147.80 415.38 L150.50 416.90 M150.5 416.9 V432.95 M155.8 390.55 V377.5 H161.6 M161.6 375.2 V379.8 L166 377.5 Z M166 375.2 V379.8 M166 377.5 H176.6 V390.55 M187.5 333.5 V361.2 L195.3 366.8 M195.3 364.3 V374.9 M195.3 372.2 L187.5 377.6 V406.6 L195.3 412 M195.3 409 V419.7 M195.3 417 L187.5 422.6 V432.95 M187.6 377.4 L190.6 376.6 L189.4 374.9 Z M194.7 411.8 L191.6 411.2 L192.9 409.5 Z M195.3 369.4 H197.5 V414.5 H195.3 M197.5 390.55 H264.9 M264.9 387.4 V393.4 M266.5 387.4 V393.4 M266.5 390.55 H307.5 V409.3 H359.5 M249.5 333.5 V375.6 M249.50 375.60 L252.20 377.12 L246.80 380.18 L252.20 383.23 L246.80 386.28 L249.50 387.80 M249.5 387.8 V401 L257.4 406.8 M257.4 404.4 V414.6 M257.4 412 L249.5 417.4 V432.95 M249.7 417.2 L252.7 416.5 L251.5 414.8 Z M257.4 409.3 H297.6 V404.4 H310.3 V390.55 H353.2 M353.2 387.4 V393.4 M354.8 387.4 V393.4 M354.8 390.55 H422.3 M278.4 364.5 V378.2 M278.40 378.20 L281.10 379.72 L275.70 382.77 L281.10 385.82 L275.70 388.88 L278.40 390.40 M333.4 364.5 V378.2 M333.40 378.20 L336.10 379.72 L330.70 382.77 L336.10 385.82 L330.70 388.88 L333.40 390.40 M367.5 364.5 V378.2 M367.50 378.20 L370.20 379.72 L364.80 382.77 L370.20 385.82 L364.80 388.88 L367.50 390.40 M367.5 390.4 V401 L359.5 406.8 M359.5 404.4 V414.6 M359.5 412 L367.5 417.4 V432.95 M367.3 417.2 L364.3 416.5 L365.5 414.8 Z M317.7 333.5 V334.8 M317.7 344.8 V346.4 M315 346.4 H320.4 L317.7 349.9 Z M316.7 337 H318.7 M317.7 336 V338 M316.7 342.6 H318.7 M385.6 333.5 V343.4 M382.9 343.4 H388.3 M382.9 344.9 H388.3 M385.6 344.9 V356.3 M382.2 356.3 H389 L385.6 360 Z M310.3 432.95 V439.9 M307.2 439.9 H313.4 L310.3 443.4 Z M432.5 333.5 V361.7 L424.5 366.8 M424.5 364.5 V374.7 M424.5 372.2 L432.5 377.6 V398.6 L424.5 404 M424.5 401.3 V411.5 M424.5 409 L432.5 414.6 V432.95 M432.4 377.4 L429.4 376.6 L430.6 374.9 Z M424.7 403.8 L427.8 403.2 L426.5 401.5 Z M424.5 369.5 H422.3 V406.4 H424.5 M432.5 388.0 H448.9 M448.90 388.00 L450.38 385.40 L453.32 390.60 L456.27 385.40 L459.22 390.60 L460.70 388.00 M460.7 388.0 H478.6 M445.4 388.0 V369.4 H451 M451 367.1 V371.7 M455.4 367.1 V371.7 L451 369.4 Z M455.4 369.4 H464.7 V388.0 M469.5 388.0 V405 M469.50 405.00 L472.20 406.52 L466.80 409.57 L472.20 412.62 L466.80 415.68 L469.50 417.20 M469.5 417.2 V432.95 M467.2 333.5 V336.2 M464.8 336.2 H469.6 M467.2 336.2 L464.8 340.5 H469.6 Z M467.2 340.5 V364.2 H485.8 M485.8 333.5 V349 M485.8 349 L482.8 351 Q481.8 352.2 483 353.2 L484.8 354 L482.8 355 Q481.6 356.4 483 357.6 L484.8 358.4 L483 359.2 Q482 360 483.2 360.8 L485.8 361.8 M485.8 361.8 V376.7 H480 M480 375.8 V379 M480 380.8 V384.6 M480 386.2 V389.6 M478.4 377.4 V388.8 M480 388.0 H485.8 V432.95 M480 382.7 H483 V387.7 M480.2 382.7 L481.8 381.8 V383.6 Z"/>
<circle cx="317.7" cy="339.8" r="5"/>
</g>
<g fill="#1414e6"><rect x="136.60" y="368.70" width="1.8" height="1.8"/><rect x="158.00" y="332.60" width="1.8" height="1.8"/><rect x="149.60" y="389.65" width="1.8" height="1.8"/><rect x="149.60" y="432.05" width="1.8" height="1.8"/><rect x="154.90" y="389.65" width="1.8" height="1.8"/><rect x="175.70" y="389.65" width="1.8" height="1.8"/><rect x="186.60" y="389.65" width="1.8" height="1.8"/><rect x="186.60" y="332.60" width="1.8" height="1.8"/><rect x="186.60" y="432.05" width="1.8" height="1.8"/><rect x="196.60" y="389.65" width="1.8" height="1.8"/><rect x="248.60" y="332.60" width="1.8" height="1.8"/><rect x="248.60" y="363.60" width="1.8" height="1.8"/><rect x="248.60" y="389.65" width="1.8" height="1.8"/><rect x="248.60" y="432.05" width="1.8" height="1.8"/><rect x="277.50" y="363.60" width="1.8" height="1.8"/><rect x="277.50" y="389.65" width="1.8" height="1.8"/><rect x="332.50" y="363.60" width="1.8" height="1.8"/><rect x="332.50" y="389.65" width="1.8" height="1.8"/><rect x="348.40" y="389.65" width="1.8" height="1.8"/><rect x="366.60" y="389.65" width="1.8" height="1.8"/><rect x="366.60" y="432.05" width="1.8" height="1.8"/><rect x="316.80" y="332.60" width="1.8" height="1.8"/><rect x="384.70" y="332.60" width="1.8" height="1.8"/><rect x="309.40" y="432.05" width="1.8" height="1.8"/><rect x="431.60" y="332.60" width="1.8" height="1.8"/><rect x="431.60" y="432.05" width="1.8" height="1.8"/><rect x="421.40" y="389.65" width="1.8" height="1.8"/><rect x="431.60" y="387.10" width="1.8" height="1.8"/><rect x="444.50" y="387.10" width="1.8" height="1.8"/><rect x="463.80" y="387.10" width="1.8" height="1.8"/><rect x="468.60" y="387.10" width="1.8" height="1.8"/><rect x="468.60" y="432.05" width="1.8" height="1.8"/><rect x="466.30" y="332.60" width="1.8" height="1.8"/><rect x="484.90" y="363.30" width="1.8" height="1.8"/></g>
<g font-family="Liberation Sans, sans-serif" font-size="3.7" fill="#000" stroke="#000" stroke-width="0.16">
<text x="156.6" y="334.8" text-anchor="end">D3</text>
<text x="133.4" y="345.1" text-anchor="start">VS-E5PX6012</text>
<text x="141.2" y="357.0" text-anchor="start">L3</text>
<text x="141.2" y="363.6" text-anchor="start">1mL</text>
<text x="136.2" y="383.8" text-anchor="end">M4</text>
<text x="136.4" y="391.4" text-anchor="end">NMOS</text>
<text x="161.4" y="375.0" text-anchor="start">D5</text>
<text x="162.4" y="383.8" text-anchor="start">D</text>
<text x="161.0" y="387.4" text-anchor="start">R10</text>
<text x="161.4" y="397.4" text-anchor="start">10R</text>
<text x="153.6" y="408.8" text-anchor="start">R12</text>
<text x="153.6" y="414.9" text-anchor="start">1000R</text>
<text x="187.0" y="368.8" text-anchor="end">Q6</text>
<text x="187.0" y="374.9" text-anchor="end">BC337-25</text>
<text x="184.2" y="412.3" text-anchor="end">BC337-25</text>
<text x="184.2" y="418.8" text-anchor="end">Q8</text>
<text x="253.6" y="380.6" text-anchor="start">R5</text>
<text x="253.6" y="386.4" text-anchor="start">470R</text>
<text x="263.6" y="387.2" text-anchor="start">C4</text>
<text x="262.0" y="396.9" text-anchor="start">1µF</text>
<text x="282.3" y="383.0" text-anchor="start">R6</text>
<text x="282.3" y="388.7" text-anchor="start">47000R</text>
<text x="251.2" y="407.5" text-anchor="end">Q4</text>
<text x="251.2" y="413.9" text-anchor="end">BC337-25</text>
<text x="321.4" y="334.8" text-anchor="start">V3</text>
<text x="321.4" y="347.8" text-anchor="start">12</text>
<text x="388.4" y="341.3" text-anchor="start">C5</text>
<text x="388.4" y="349.3" text-anchor="start">4700µF</text>
<text x="337.0" y="383.0" text-anchor="start">R9</text>
<text x="337.0" y="388.7" text-anchor="start">47000R</text>
<text x="352.0" y="387.2" text-anchor="start">C3</text>
<text x="351.3" y="396.9" text-anchor="start">1µF</text>
<text x="370.6" y="383.0" text-anchor="start">R7</text>
<text x="370.6" y="388.7" text-anchor="start">470R</text>
<text x="366.0" y="407.5" text-anchor="start">Q5</text>
<text x="366.0" y="413.9" text-anchor="start">BC337-25</text>
<text x="460.3" y="334.4" text-anchor="start">D4</text>
<text x="441.0" y="344.8" text-anchor="start">VS-E5PX6012</text>
<text x="488.2" y="354.6" text-anchor="start">L4</text>
<text x="488.2" y="360.8" text-anchor="start">1mL</text>
<text x="432.2" y="368.8" text-anchor="start">Q3</text>
<text x="431.7" y="374.9" text-anchor="start">BC337-25</text>
<text x="451.0" y="366.1" text-anchor="start">D6</text>
<text x="452.2" y="375.8" text-anchor="start">D</text>
<text x="451.2" y="384.7" text-anchor="start">R11</text>
<text x="451.3" y="393.9" text-anchor="start">10R</text>
<text x="486.4" y="381.7" text-anchor="start">M3</text>
<text x="486.4" y="388.3" text-anchor="start">NMOS</text>
<text x="436.2" y="404.6" text-anchor="start">BC337-25</text>
<text x="436.2" y="411.0" text-anchor="start">Q7</text>
<text x="472.6" y="409.3" text-anchor="start">R13</text>
<text x="472.6" y="414.8" text-anchor="start">1000R</text>
</g></svg>
<div id="statusbar" class="abs"></div>
<div id="taskbar" class="abs"></div>
<svg class="abs" style="left:11.4px;top:534.2px" width="25.3" height="27.6" viewBox="0 0 22 24"><circle cx="8" cy="8.6" r="3.6" fill="#f6b53a"/><path d="M3.6 16.6 Q0.8 16.4 1.2 13.8 Q1.8 11.6 4.4 12 Q5.6 8.8 9 9.6 Q11.6 10.2 11.8 12.6 Q14.8 12.6 14.6 15 Q14.4 16.6 12.6 16.6 Z" fill="#e6ecf6" stroke="#b8c6de" stroke-width="0.5"/><path d="M2 15 Q7 17.8 14.4 15.4 Q14 16.6 12.6 16.6 H3.6 Q2.2 16.4 2 15 Z" fill="#b7c7e4"/><circle cx="13.6" cy="6.4" r="3.9" fill="#c42b1c"/><text x="13.6" y="8.4" font-size="5.6" font-weight="bold" fill="#fff" text-anchor="middle" font-family="Liberation Sans, sans-serif">1</text></svg>
<div class="abs" style="left:33.8px;top:538.1px;font-size:7.1px;color:#1b1b1b;white-space:nowrap">12°C</div>
<div class="abs" style="left:33.3px;top:547.7px;font-size:8px;color:#5e5a5c;white-space:nowrap">Nuvoloso</div>
<svg class="abs" style="left:276px;top:540.4px" width="15" height="15" viewBox="0 0 15 15"><defs><linearGradient id="wl" x1="0" y1="0" x2="1" y2="1"><stop offset="0" stop-color="#5fc6f4"/><stop offset="1" stop-color="#0f7ad6"/></linearGradient></defs><rect x="0" y="0" width="6.9" height="6.9" fill="url(#wl)"/><rect x="7.7" y="0" width="6.9" height="6.9" fill="url(#wl)"/><rect x="0" y="7.7" width="6.9" height="6.9" fill="url(#wl)"/><rect x="7.7" y="7.7" width="6.9" height="6.9" fill="url(#wl)"/></svg>
<div class="abs" style="left:300.8px;top:537.6px;width:142px;height:19.6px;border-radius:10px;background:#f6f0f1;border:0.6px solid #e4dadb"></div>
<svg class="abs" style="left:307px;top:541.6px" width="12" height="12" viewBox="0 0 12 12"><circle cx="4.8" cy="4.8" r="3.3" fill="none" stroke="#1e1e1e" stroke-width="0.95"/><path d="M7.2 7.4 L10 10.4" stroke="#1e1e1e" stroke-width="1.1" stroke-linecap="round"/></svg>
<div class="abs" style="left:324px;top:543.2px;font-size:8.5px;color:#55575b;white-space:nowrap">Search</div>
<svg class="abs" style="left:425.4px;top:540.6px" width="15" height="15" viewBox="0 0 15 15"><path d="M7.4 0.8 A6.2 6.2 0 1 1 3 11.6 L0.8 13.6 L1.6 9.6 A6.2 6.2 0 0 1 7.4 0.8 Z" fill="#f4f8fd" stroke="#2f8be0" stroke-width="0.9"/><path d="M5.8 3.6 V9.2 Q7.4 11.2 9.4 9.4 Q10.4 7.6 8.6 6.8 L6.4 6.6" fill="none" stroke="#1a6fd0" stroke-width="1.3" stroke-linecap="round" stroke-linejoin="round"/></svg>
<svg class="abs" style="left:451px;top:540px" width="16" height="16" viewBox="0 0 16 16"><rect x="5" y="0.8" width="10" height="10" rx="1" fill="#f2f0f0" stroke="#d8d4d4" stroke-width="0.4"/><rect x="0.8" y="4.6" width="10.6" height="10.2" rx="1" fill="#2b2b2b"/><rect x="5" y="4.6" width="6.4" height="6.2" fill="#9c9c9c"/></svg>
<svg class="abs" style="left:478.4px;top:540px" width="16" height="16" viewBox="0 0 16 16"><defs><linearGradient id="cg" x1="0" y1="0" x2="1" y2="1"><stop offset="0" stop-color="#8b8ff0"/><stop offset="1" stop-color="#4a4fc4"/></linearGradient></defs><path d="M8 0.8 A7 7 0 1 1 3.6 13.4 L1 15 L1.8 11.2 A7 7 0 0 1 8 0.8 Z" fill="url(#cg)"/><rect x="3.8" y="5" width="5.6" height="5" rx="1" fill="#fff"/><path d="M9.6 7 L12.2 5.2 V9.8 L9.6 8 Z" fill="#fff"/></svg>
<svg class="abs" style="left:508px;top:540px" width="17" height="15" viewBox="0 0 17 15"><path d="M0.6 2 Q0.6 1 1.6 1 H6 L7.6 2.8 H15.4 Q16.4 2.8 16.4 3.8 V12.6 Q16.4 13.6 15.4 13.6 H1.6 Q0.6 13.6 0.6 12.6 Z" fill="#f0b422"/><path d="M0.6 5 H16.4 V12.8 Q16.4 13.8 15.4 13.8 H1.6 Q0.6 13.8 0.6 12.8 Z" fill="#fbd661"/><rect x="2.8" y="8.6" width="11.4" height="3" rx="0.6" fill="#2a86dc"/><rect x="5" y="11" width="7" height="2.8" fill="#4aa6f0"/></svg>
<svg class="abs" style="left:537px;top:541px" width="17" height="13" viewBox="0 0 17 13"><rect x="0.6" y="0.6" width="15.8" height="11.8" fill="#f4f4f6" stroke="#9aa0a8" stroke-width="0.6"/><rect x="0.6" y="0.6" width="15.8" height="1.8" fill="#6a7079"/><rect x="5" y="3.2" width="6.4" height="8.4" fill="#1b7fdc"/><rect x="1.6" y="3.2" width="2.4" height="8.4" fill="#d9dde3"/><rect x="12.4" y="3.2" width="3" height="8.4" fill="#d9dde3"/></svg>
<svg class="abs" style="left:565px;top:539.6px" width="16" height="16" viewBox="0 0 16 16"><circle cx="8" cy="8" r="7.4" fill="#fff"/><path d="M8 8 L1.6 4.3 A7.4 7.4 0 0 1 14.4 4.3 Z" fill="#e33b2e"/><path d="M8 8 L14.4 4.3 A7.4 7.4 0 0 1 8 15.4 Z" fill="#fbc116"/><path d="M8 8 L8 15.4 A7.4 7.4 0 0 1 1.6 4.3 Z" fill="#2da94f"/><circle cx="8" cy="8" r="3.4" fill="#fff"/><circle cx="8" cy="8" r="2.7" fill="#3f86f4"/></svg>
<svg class="abs" style="left:593.6px;top:539.6px" width="16" height="16" viewBox="0 0 16 16"><defs><linearGradient id="eg" x1="0" y1="0" x2="1" y2="1"><stop offset="0" stop-color="#35c1f1"/><stop offset="0.5" stop-color="#1b9de2"/><stop offset="1" stop-color="#0c59a4"/></linearGradient></defs><circle cx="8" cy="8" r="7.4" fill="url(#eg)"/><path d="M1 9 Q1.4 3 8 2.6 Q13.4 2.8 14.8 7.2 Q12 4.8 8.4 5.6 Q5.4 6.4 5.2 9.6 Q3 8 1 9 Z" fill="#5fe08a" opacity="0.85"/><path d="M5.4 8.4 Q6 6.2 8.6 6.2 Q11 6.4 11 8.4 Q10.8 10 9 10.2 Q11.4 12 14.6 10.6 Q12.6 15 8.6 15 Q4.6 13.6 5.4 8.4 Z" fill="#f2f7fb"/></svg>
<svg class="abs" style="left:622.6px;top:539px" width="16" height="17" viewBox="0 0 16 17"><path d="M5 4.4 V2.6 Q5 1.2 6.4 1.2 H9.6 Q11 1.2 11 2.6 V4.4" fill="none" stroke="#1d66c0" stroke-width="1.1"/><rect x="0.8" y="4" width="14.4" height="11.8" rx="1.6" fill="#1c4f9c"/><rect x="0.8" y="4" width="14.4" height="5" rx="1.6" fill="#2a78d6"/><rect x="5" y="7" width="2.7" height="2.7" fill="#f25022"/><rect x="8.3" y="7" width="2.7" height="2.7" fill="#7fba00"/><rect x="5" y="10.3" width="2.7" height="2.7" fill="#00a4ef"/><rect x="8.3" y="10.3" width="2.7" height="2.7" fill="#ffb900"/></svg>
<div class="abs" style="left:647px;top:535.4px;width:24.4px;height:25.6px;border-radius:2.6px;background:#f6eeee;border:0.5px solid #e6dcdc"></div>
<svg class="abs" style="left:651px;top:539.4px" width="17" height="16" viewBox="0 0 17 16"><path d="M1.2 1.4 L1.6 14.4 L12.4 6 L14 1 Z" fill="none" stroke="#1c1c1c" stroke-width="1"/><path d="M4.4 1.6 L14.4 1 L12.2 7 L3.6 7.6 Z" fill="#8b0a0a"/><path d="M6.4 2.2 V6 H8.2 M8.8 2.6 H12.4 M10.8 2.6 L10 6.4" stroke="#f7eaea" stroke-width="1" fill="none"/></svg>
<div class="abs" style="left:654.6px;top:557.6px;width:9px;height:1.7px;border-radius:1px;background:#2a7fd4"></div>
<svg class="abs" style="left:679.4px;top:536px" width="22" height="20" viewBox="-0.4 -3.6 22 20"><circle cx="8" cy="8" r="7.4" fill="#fff"/><path d="M8 8 L1.6 4.3 A7.4 7.4 0 0 1 14.4 4.3 Z" fill="#e33b2e"/><path d="M8 8 L14.4 4.3 A7.4 7.4 0 0 1 8 15.4 Z" fill="#fbc116"/><path d="M8 8 L8 15.4 A7.4 7.4 0 0 1 1.6 4.3 Z" fill="#2da94f"/><circle cx="8" cy="8" r="3.4" fill="#fff"/><circle cx="8" cy="8" r="2.7" fill="#3f86f4"/><circle cx="14" cy="1.2" r="4.6" fill="#6a1fb0"/><text x="14" y="3.2" font-size="5" fill="#fff" text-anchor="middle" font-family="Liberation Sans, sans-serif">L</text></svg>
<svg class="abs" style="left:708px;top:539.4px" width="17" height="17" viewBox="0 0 17 17"><path d="M8.4 0.8 L10.4 2 L12.8 1.6 L13.6 3.8 L15.8 4.8 L15.2 7.2 L16.4 9.2 L14.6 10.8 L14.6 13.2 L12.2 13.6 L10.8 15.6 L8.6 14.6 L6.4 15.8 L4.8 13.8 L2.4 13.6 L2.2 11.2 L0.6 9.4 L1.8 7.4 L1 5 L3.2 4 L4 1.8 L6.4 2 Z" fill="#d8483c"/><circle cx="8.4" cy="8.3" r="4.6" fill="none" stroke="#f4d6d2" stroke-width="0.9"/><circle cx="8.4" cy="8.3" r="1.9" fill="none" stroke="#f4d6d2" stroke-width="0.9"/><path d="M10.3 6.4 V9.4 Q11 10.6 12.2 9.8" fill="none" stroke="#f4d6d2" stroke-width="0.8"/></svg>
<div class="abs" style="left:514.6px;top:558px;width:3.2px;height:1.3px;border-radius:0.7px;background:#8a8688"></div>
<div class="abs" style="left:686.0px;top:558px;width:3.2px;height:1.3px;border-radius:0.7px;background:#8a8688"></div>
<div class="abs" style="left:714.8px;top:558px;width:3.2px;height:1.3px;border-radius:0.7px;background:#8a8688"></div>
<svg class="abs" style="left:836px;top:540px" width="90" height="16" viewBox="836 540 90 16"><path d="M839.2 549.2 L842.4 546 L845.6 549.2" fill="none" stroke="#222" stroke-width="0.9"/><path d="M860.6 550.4 Q858 550.2 858.4 547.8 Q859 546.2 860.8 546.4 Q861.8 543.6 864.6 544 Q866.8 544.4 867.2 546.6 Q869.4 546.8 869.2 548.8 Q869 550.4 867.4 550.4 Z" fill="#cfcfd1" stroke="#3a3a3a" stroke-width="0.75"/><path d="M879.4 545.4 Q884 541.6 888.8 545.4 M881 547.2 Q884 544.8 887.2 547.2 M882.6 548.8 Q884 547.8 885.6 548.8" fill="none" stroke="#333" stroke-width="0.8"/><circle cx="884.1" cy="550.2" r="0.7" fill="#333"/><path d="M895 546.2 H896.8 L899 544.2 V551 L896.8 549 H895 Z" fill="none" stroke="#333" stroke-width="0.7"/><path d="M900.4 546 Q901.4 547.6 900.4 549.2" fill="none" stroke="#555" stroke-width="0.6"/><path d="M902 544.8 Q903.8 547.6 902 550.4" fill="none" stroke="#b0acae" stroke-width="0.6"/><path d="M903.6 543.8 Q906 547.6 903.6 551.4" fill="none" stroke="#c8c4c6" stroke-width="0.6"/><rect x="910.8" y="544.8" width="9" height="5.6" rx="1" fill="#1e1e1e"/><rect x="919.8" y="546.4" width="1" height="2.4" fill="#1e1e1e"/><path d="M911.4 543.4 L913 546 M913 543 Q914.6 544.2 913.4 546.4" stroke="#1e1e1e" stroke-width="0.8" fill="none"/><path d="M912.4 549.2 L915.4 546 H918.6" stroke="#e8e0e0" stroke-width="0.6" fill="none"/></svg>
<div class="abs" style="left:920px;top:537.4px;width:52px;text-align:right;font-size:7.5px;color:#1b1b1b;white-space:nowrap">19:06</div>
<div class="abs" style="left:920px;top:547.6px;width:52px;text-align:right;font-size:7.5px;letter-spacing:0.3px;color:#1b1b1b;white-space:nowrap">31/12/2023</div>
<svg class="abs" style="left:977px;top:541.6px" width="10" height="12" viewBox="0 0 10 12"><path d="M4.8 0.8 Q7.8 1 7.8 4.4 V6.6 L9 8.6 H0.6 L1.8 6.6 V4.4 Q1.8 1 4.8 0.8 Z" fill="#1467c8"/><path d="M3.4 9.4 Q4.8 11.4 6.2 9.4 Z" fill="#1467c8"/></svg>
</div></body></html>
